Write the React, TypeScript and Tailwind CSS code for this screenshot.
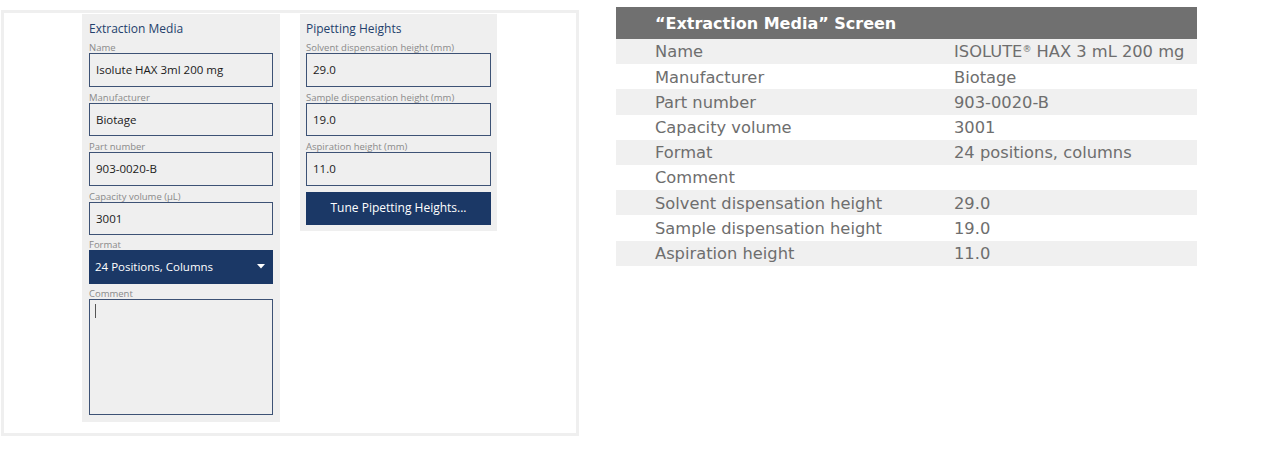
import React from 'react';

const leftFont = { fontFamily: '"Open Sans", "Noto Sans", sans-serif' };
const tableFont = { fontFamily: '"DejaVu Sans", Verdana, sans-serif' };

const Label: React.FC<{ text: string }> = ({ text }) => (
  <div className="text-[9.5px] leading-[11px] text-[#8a8a8a] whitespace-nowrap">{text}</div>
);

const Field: React.FC<{ label: string; value: string }> = ({ label, value }) => (
  <div className="flex flex-col">
    <Label text={label} />
    <div className="h-[33.5px] border border-[#3d5275] bg-[#efefef] flex items-center px-[6px] text-[11.5px] text-[#1a1a1a]">
      {value}
    </div>
  </div>
);

const rows: [string, React.ReactNode][] = [
  ['Name', <>ISOLUTE<span className="relative -top-[5px] text-[9px]">®</span> HAX 3 mL 200 mg</>],
  ['Manufacturer', 'Biotage'],
  ['Part number', '903-0020-B'],
  ['Capacity volume', '3001'],
  ['Format', '24 positions, columns'],
  ['Comment', ''],
  ['Solvent dispensation height', '29.0'],
  ['Sample dispensation height', '19.0'],
  ['Aspiration height', '11.0'],
];

export default function App() {
  return (
    <div className="w-[1285px] h-[459px] bg-white flex items-start">
      {/* screenshot frame */}
      <div
        className="ml-[1px] mt-[10px] w-[578px] h-[426px] border-[3px] border-[#efefef] flex items-start pl-[78px] pt-[1px]"
        style={leftFont}
      >
        {/* Extraction Media */}
        <div className="w-[198px] bg-[#efefef] px-[7px] pt-[4px] pb-[7px] flex flex-col gap-[5px]">
          <div className="text-[12px] leading-[20px] h-[20px] pt-[1px] -mb-[1px] text-[#243f6c]">Extraction Media</div>
          <Field label="Name" value="Isolute HAX 3ml 200 mg" />
          <Field label="Manufacturer" value="Biotage" />
          <Field label="Part number" value="903-0020-B" />
          <Field label="Capacity volume (µL)" value="3001" />
          <div className="flex flex-col -mt-[1px]">
            <Label text="Format" />
            <div className="h-[33.5px] bg-[#1b3866] flex items-center justify-between pl-[6px] pr-[8px] text-[11.5px] text-white">
              <span>24 Positions, Columns</span>
              <svg width="8" height="5" viewBox="0 0 8 5">
                <path d="M0 0 L8 0 L4 4.5 Z" fill="#ffffff" />
              </svg>
            </div>
          </div>
          <div className="flex flex-col -mt-[1px]">
            <Label text="Comment" />
            <div className="h-[116px] border border-[#3d5275] bg-[#efefef] pl-[5px] pt-[4px]">
              <div className="w-[1px] h-[14px] bg-[#555]" />
            </div>
          </div>
        </div>

        {/* Pipetting Heights */}
        <div className="ml-[20px] w-[197px] bg-[#efefef] px-[6px] pt-[4px] pb-[6px] flex flex-col gap-[5px]">
          <div className="text-[12px] leading-[20px] h-[20px] pt-[1px] -mb-[1px] text-[#243f6c]">Pipetting Heights</div>
          <Field label="Solvent dispensation height (mm)" value="29.0" />
          <Field label="Sample dispensation height (mm)" value="19.0" />
          <Field label="Aspiration height (mm)" value="11.0" />
          <div className="mt-[1px] h-[33.5px] bg-[#1b3866] flex items-center justify-center text-[12px] text-white">
            Tune Pipetting Heights...
          </div>
        </div>
      </div>

      {/* table */}
      <div className="ml-[37px] mt-[7px] w-[581px]" style={tableFont}>
        <div className="h-[32px] bg-[#707070] flex items-center pl-[39px] pt-[1px] text-[16px] font-bold text-white">
          “Extraction Media” Screen
        </div>
        {rows.map(([k, v], i) => (
          <div
            key={k}
            className={`h-[25.2px] flex items-center pt-[2px] text-[16.3px] text-[#6e6e6e] ${i % 2 === 0 ? 'bg-[#f0f0f0]' : 'bg-white'}`}
          >
            <div className="w-[338px] pl-[39px]">{k}</div>
            <div>{v}</div>
          </div>
        ))}
      </div>
    </div>
  );
}
